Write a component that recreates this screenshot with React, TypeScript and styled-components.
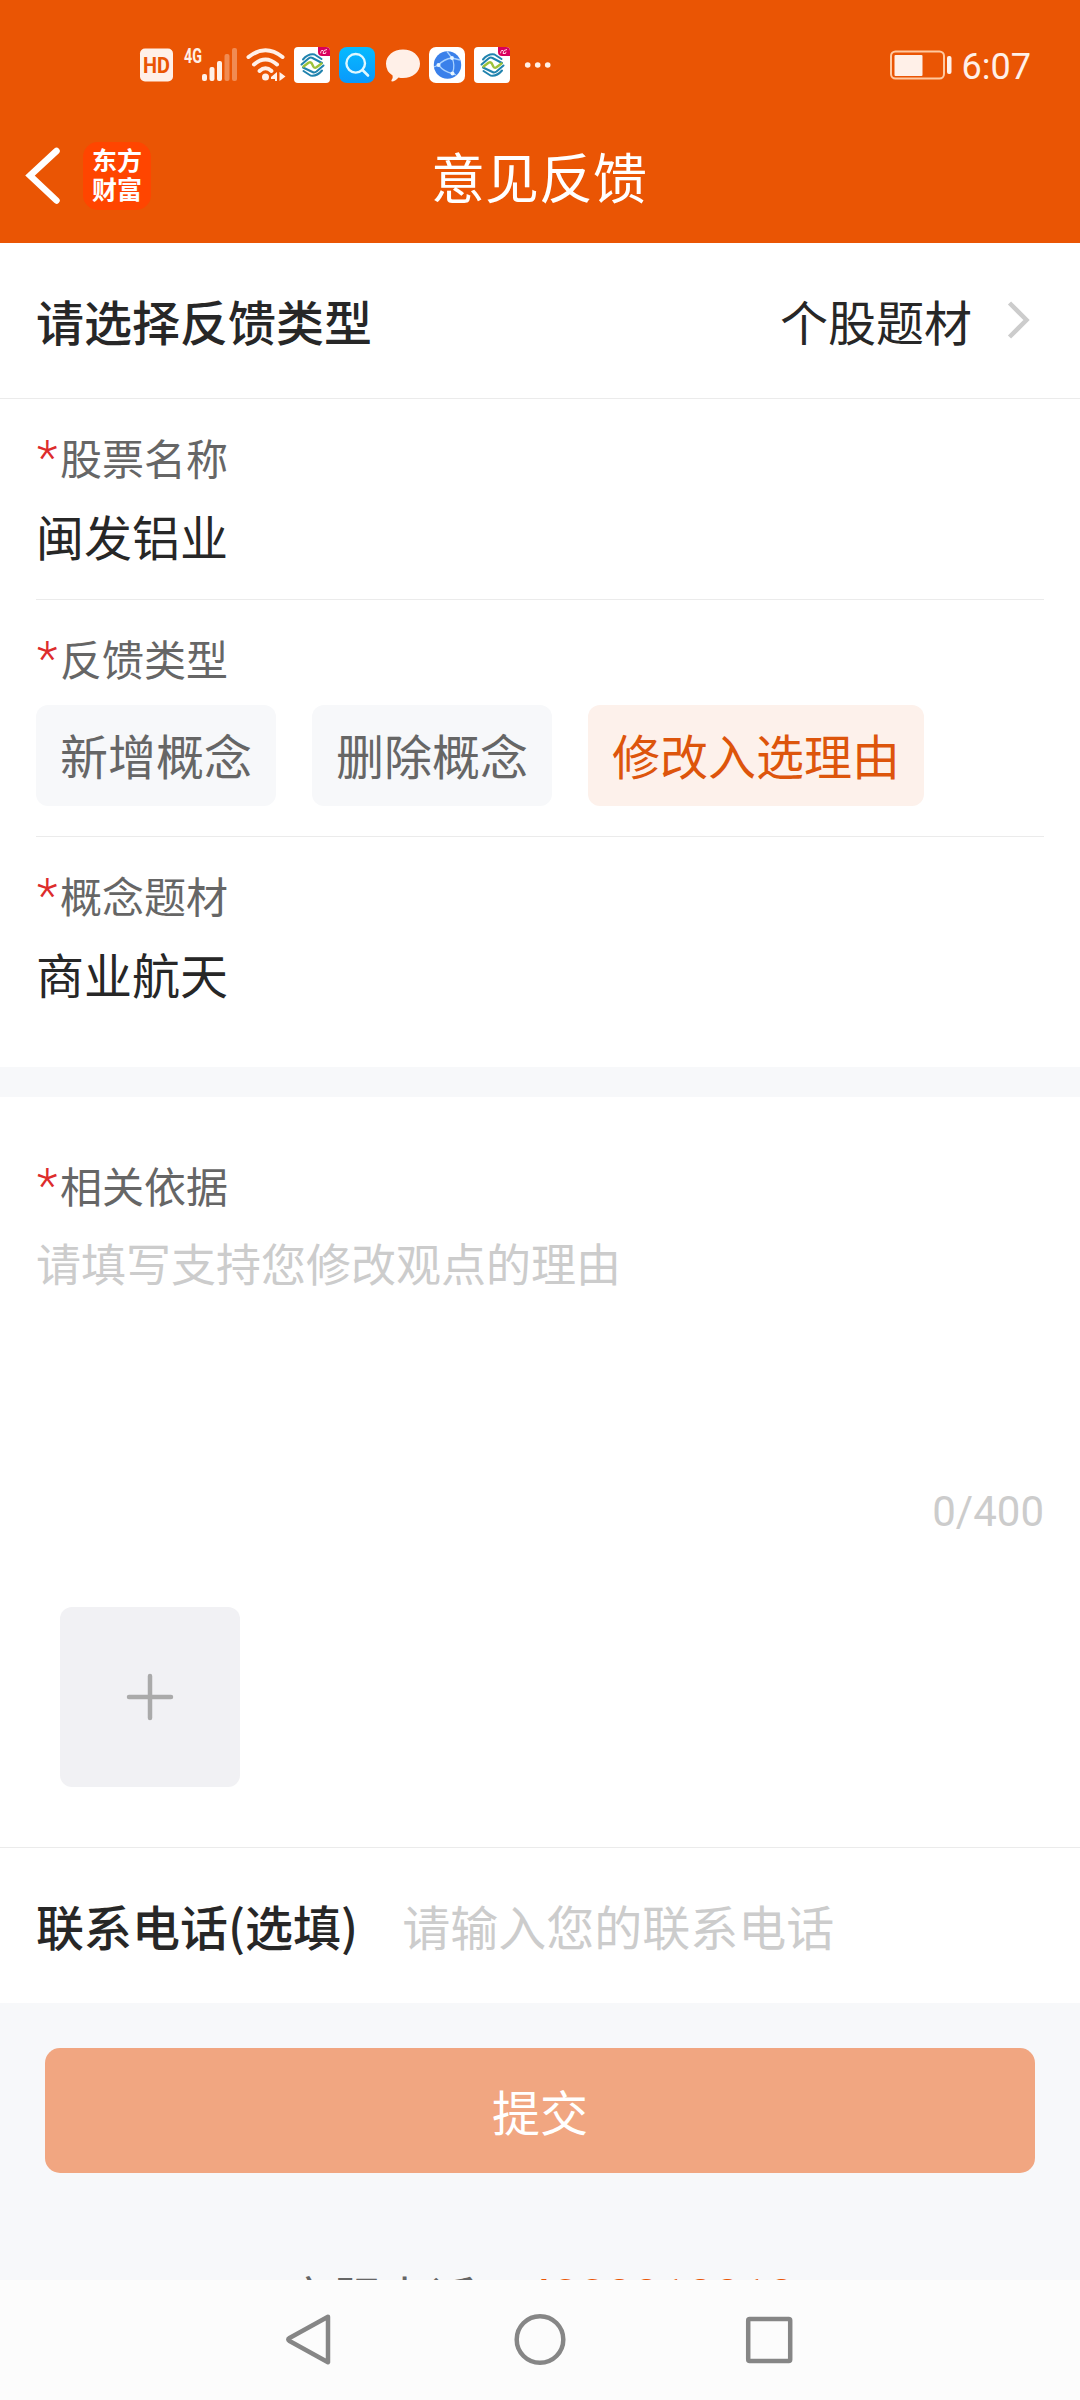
import React from "react";
import styled, { createGlobalStyle } from "styled-components";

const cjk = `"Noto Sans CJK SC", "Noto Sans", sans-serif`;
const latin = `Roboto, "Noto Sans CJK SC", sans-serif`;

const GlobalStyle = createGlobalStyle`
  * { box-sizing: border-box; }
  body { margin: 0; background: #f7f8fa; font-family: ${cjk}; }
  button, input, textarea { font-family: inherit; }
`;

const Screen = styled.div`
  display: flex;
  flex-direction: column;
  width: 1080px;
  height: 2400px;
  overflow: hidden;
  background: #f7f8fa;
  color: #272727;
`;

const Header = styled.header`
  flex: none;
  height: 243px;
  background: #ea5504;
  color: #fff;
`;

const StatusBar = styled.div`
  display: flex;
  justify-content: space-between;
  align-items: center;
  height: 110px;
  padding: 20px 49px 0 140px;
`;

const StatusIcons = styled.div`
  display: flex;
  align-items: center;
`;

const StatusGlyph = styled.svg<{ $gap?: number }>`
  display: block;
  flex: none;
  overflow: visible;
  margin-right: ${(p) => p.$gap ?? 9}px;
`;

const Power = styled.div`
  display: flex;
  align-items: center;
  gap: 10px;
`;

const Clock = styled.span`
  font: 400 36px/50px ${latin};
  color: #fff0e8;
  padding-top: 4px;
`;

const TitleBar = styled.div`
  display: grid;
  grid-template-columns: 1fr auto 1fr;
  align-items: center;
  height: 133px;
  padding: 0 27px 0 25px;
`;

const TitleLeft = styled.div`
  display: flex;
  align-items: center;
  gap: 22px;
  padding-bottom: 1px;
`;

const BrandLogo = styled.div`
  display: flex;
  flex-direction: column;
  align-items: center;
  justify-content: center;
  width: 68px;
  height: 68px;
  border-radius: 15px;
  background: #ff4500;
  font-size: 25px;
  line-height: 29px;
  font-weight: 700;
  padding-bottom: 5px;
`;

const Title = styled.h1`
  margin: 0;
  padding-bottom: 1px;
  font-size: 54px;
  line-height: 80px;
  font-weight: 400;
`;

const Content = styled.main`
  flex: 1;
  min-height: 0;
  overflow: hidden;
`;

const TypeRow = styled.div`
  display: flex;
  align-items: center;
  justify-content: space-between;
  height: 156px;
  padding: 0 48px 2px 36px;
  background: #fff;
  border-bottom: 1px solid #ebebeb;
`;

const RowTitle = styled.span`
  font-size: 48px;
  line-height: 66px;
  font-weight: 500;
  white-space: nowrap;
`;

const TypeValue = styled.div`
  display: flex;
  align-items: center;
  gap: 34px;
  font-size: 48px;
  line-height: 66px;
`;

const Fields = styled.section`
  background: #fff;
  padding: 0 36px;
`;

const Field = styled.div<{ $bottom: number; $line?: boolean }>`
  padding: 28px 0 ${(p) => p.$bottom}px;
  border-bottom: ${(p) => (p.$line ? "1px solid #ebebeb" : "none")};
`;

const Label = styled.div`
  display: flex;
  height: 60px;
  font-size: 42px;
  line-height: 60px;
  color: #666;
`;

const Star = styled.span`
  width: 24px;
  padding-left: 1px;
  font: 400 48px/62px ${latin};
  font-weight: 300;
  color: #dd2c2c;
`;

const Value = styled.div`
  margin-top: 15px;
  font-size: 48px;
  line-height: 66px;
`;

const Chips = styled.div`
  display: flex;
  gap: 36px;
  margin-top: 17px;
`;

const Chip = styled.button<{ $active?: boolean }>`
  height: 101px;
  padding: 0 24px 3px;
  border: 0;
  border-radius: 12px;
  font-size: 48px;
  line-height: 66px;
  background: ${(p) => (p.$active ? "#fdf1eb" : "#f7f8fa")};
  color: ${(p) => (p.$active ? "#dd550c" : "#666")};
`;

const Evidence = styled.section`
  margin-top: 30px;
  padding: 58px 36px 60px;
  background: #fff;
  border-bottom: 1px solid #ebebeb;
`;

const Reason = styled.textarea`
  display: block;
  width: 100%;
  height: 255px;
  margin-top: 17px;
  padding: 0;
  border: 0;
  outline: 0;
  resize: none;
  background: transparent;
  font-size: 45px;
  line-height: 62px;
  &::placeholder { color: #ccc; opacity: 1; }
`;

const Counter = styled.div`
  text-align: right;
  font: 400 42px/50px ${latin};
  color: #ccc;
`;

const Upload = styled.button`
  display: flex;
  align-items: center;
  justify-content: center;
  width: 180px;
  height: 180px;
  margin: 70px 0 0 24px;
  padding: 0;
  border: 0;
  border-radius: 12px;
  background: #f1f1f4;
`;

const Contact = styled.label`
  display: flex;
  align-items: center;
  gap: 44px;
  height: 155px;
  padding: 0 36px 2px;
  background: #fff;
`;

const Phone = styled.input`
  flex: 1;
  min-width: 0;
  height: 66px;
  padding: 0;
  border: 0;
  outline: 0;
  background: transparent;
  font-size: 48px;
  line-height: 66px;
  &::placeholder { color: #ccc; opacity: 1; }
`;

const Submit = styled.button`
  display: block;
  width: 990px;
  height: 125px;
  margin: 45px auto 0;
  padding: 0 0 2px;
  border: 0;
  border-radius: 15px;
  background: #f1a681;
  color: #fff;
  font-size: 48px;
  line-height: 66px;
`;

const Hotline = styled.p`
  margin: 88px 0 0;
  text-align: center;
  font-size: 48px;
  line-height: 70px;
  color: #666;
`;

const HotlineNumber = styled.a`
  font-family: ${latin};
  line-height: 1;
  vertical-align: 4px;
  color: #ea5504;
`;

const SystemNav = styled.nav`
  flex: none;
  display: flex;
  align-items: center;
  justify-content: center;
  gap: 170px;
  height: 120px;
  background: #fcfcfc;
`;

const tint = "#fff0e8";

const CarrierIcon = () => (
  <StatusGlyph width="36" height="36" viewBox="0 0 36 36">
    <rect width="36" height="36" rx="4" fill="#fff" />
    <g fill="none" strokeLinecap="round" strokeLinejoin="round">
      <g stroke="#2083ae" strokeWidth="2">
        <path d="M7.500 17.500L14.500 11.500Q16.500 10 18.500 11L28 16" />
        <path d="M9 12.500Q14 6.500 20.500 7.500L27.500 12" />
        <path d="M29.500 18.500L22.500 24.500Q20.500 26 18.500 25L9 20.500" />
        <path d="M28 23.500Q23 29.500 16.500 28.500L9.500 24" />
      </g>
      <path d="M9.500 19.500L14.500 15.700Q16.500 14.500 17.700 16.200L19.300 19.500Q20.500 21.500 22.500 20.300L27.500 16.500" stroke="#9cc23c" strokeWidth="2.400" />
    </g>
    <path d="M24 0h8q4 0 4 4v5h-8q-4 0-4-4z" fill="#d9005c" />
    <path d="M29 3.500q-2-.5-2 1t-1 1.700M33 2.500l-3 1-1 3h2.500l.5-1.700" fill="none" stroke="#ffd5e5" strokeWidth="1" />
  </StatusGlyph>
);

const StatusLeft = () => (
  <StatusIcons>
    <StatusGlyph $gap={11} width="33" height="34" viewBox="0 0 33 34">
      <rect y="0.500" width="33" height="33" rx="5" fill={tint} />
      <text x="16.500" y="24.700" textAnchor="middle" textLength="27" lengthAdjust="spacingAndGlyphs" fontFamily="Roboto, sans-serif" fontWeight="700" fontSize="22" fill="#ea5504">HD</text>
    </StatusGlyph>
    <StatusGlyph $gap={8} width="54" height="36" viewBox="0 0 54 36">
      <text x="0" y="15.500" textLength="18" lengthAdjust="spacingAndGlyphs" fontFamily="Roboto, sans-serif" fontWeight="700" fontSize="20" fill={tint}>4G</text>
      <g fill={tint}>
        <rect x="18" y="27" width="5" height="7" rx="2" />
        <rect x="25.500" y="20" width="5" height="14" rx="2" />
        <rect x="33" y="14" width="5" height="20" rx="2" />
        <rect x="40.500" y="7" width="5" height="27" rx="2" opacity="0.350" />
        <rect x="48" y="1" width="5" height="33" rx="2" opacity="0.350" />
      </g>
    </StatusGlyph>
    <StatusGlyph $gap={8} width="40" height="36" viewBox="0 0 40 36">
      <g fill="none" stroke={tint} strokeWidth="4" strokeLinecap="round">
        <path d="M2.500 10Q19.500 -3.500 36.500 10" />
        <path d="M8 17.500Q19.500 7.500 31 17.500" />
        <path d="M13.500 24Q19.500 18.500 25.500 24" />
      </g>
      <circle cx="19.500" cy="30" r="3.500" fill={tint} />
      <path d="M31 25v9h-2v-2h-4v-2zM33.500 25l6 4.500-6 4.500z" fill={tint} />
    </StatusGlyph>
    <CarrierIcon />
    <StatusGlyph $gap={11} width="36" height="36" viewBox="0 0 36 36">
      <defs>
        <linearGradient id="searchFill" x1="0" y1="0" x2="0" y2="1">
          <stop offset="0" stopColor="#06bbff" />
          <stop offset="1" stopColor="#0a98fb" />
        </linearGradient>
      </defs>
      <rect width="36" height="36" rx="8" fill="url(#searchFill)" />
      <circle cx="16.700" cy="16.300" r="9.300" fill="none" stroke="#dff8ff" strokeWidth="2.400" />
      <path d="M23.500 23l5.500 5.500" stroke="#dff8ff" strokeWidth="2.600" strokeLinecap="round" />
    </StatusGlyph>
    <StatusGlyph $gap={9} width="34" height="36" viewBox="0 0 34 36">
      <path d="M17 2.500c9.500 0 17 6 17 14.300S26.500 31 17 31q-2.500 0-4.500-.5Q9 34.500 6 34.500q-1.200-.4-.4-1.500 1.600-2 1-4.500Q0 24.500 0 16.800C0 8.500 7.500 2.500 17 2.500z" fill={tint} />
    </StatusGlyph>
    <StatusGlyph width="36" height="36" viewBox="0 0 36 36">
      <rect width="36" height="36" rx="7" fill="#fff" />
      <circle cx="18.500" cy="18" r="13.700" fill="#3a80ea" />
      <g fill="none" stroke="#a9d2ff" strokeWidth="1.300">
        <path d="M9.500 18Q15 12 23 11L31 13M23 11Q26.500 18 23.500 26.500M9.500 18Q15 25 23.500 26.500L27 28M9.500 18L5 20M23 11L18 4.500" />
      </g>
      <g fill="#e8f6ff">
        <circle cx="9.500" cy="18" r="2" />
        <circle cx="23" cy="11" r="1.900" />
        <circle cx="23.500" cy="26.500" r="2" />
      </g>
    </StatusGlyph>
    <CarrierIcon />
    <StatusGlyph $gap={0} width="42" height="36" viewBox="0 0 42 36">
      <g fill={tint}>
        <circle cx="8.700" cy="18" r="2.800" />
        <circle cx="18.700" cy="18" r="2.800" />
        <circle cx="28.700" cy="18" r="2.800" />
      </g>
    </StatusGlyph>
  </StatusIcons>
);

const FieldLabel = ({ children }: { children: React.ReactNode }) => (
  <Label>
    <Star>*</Star>
    {children}
  </Label>
);

export default function App() {
  return (
    <Screen>
      <GlobalStyle />
      <Header>
        <StatusBar>
          <StatusLeft />
          <Power>
            <svg width="62" height="30" viewBox="0 0 62 30">
              <rect x="1" y="1.500" width="53" height="27" rx="4.500" fill="none" stroke="#ffc9a0" strokeWidth="2" />
              <rect x="4.500" y="5" width="28" height="21" rx="1" fill={tint} />
              <rect x="57" y="6" width="4.500" height="18" rx="2" fill={tint} />
            </svg>
            <Clock>6:07</Clock>
          </Power>
        </StatusBar>
        <TitleBar>
          <TitleLeft>
            <svg width="36" height="60" viewBox="0 0 36 60">
              <path d="M31.500 5L5 29.500L31.500 54.500" fill="none" stroke="#fff" strokeWidth="6.500" strokeLinecap="round" />
            </svg>
            <BrandLogo>
              <span>东方</span>
              <span>财富</span>
            </BrandLogo>
          </TitleLeft>
          <Title>意见反馈</Title>
        </TitleBar>
      </Header>

      <Content>
        <TypeRow>
          <RowTitle>请选择反馈类型</RowTitle>
          <TypeValue>
            个股题材
            <svg width="26" height="40" viewBox="0 0 26 40">
              <path d="M3.500 3L20.500 20L3.500 37" fill="none" stroke="#ccc" strokeWidth="4.500" />
            </svg>
          </TypeValue>
        </TypeRow>

        <Fields>
          <Field $bottom={31} $line>
            <FieldLabel>股票名称</FieldLabel>
            <Value>闽发铝业</Value>
          </Field>
          <Field $bottom={30} $line>
            <FieldLabel>反馈类型</FieldLabel>
            <Chips>
              <Chip>新增概念</Chip>
              <Chip>删除概念</Chip>
              <Chip $active>修改入选理由</Chip>
            </Chips>
          </Field>
          <Field $bottom={61}>
            <FieldLabel>概念题材</FieldLabel>
            <Value>商业航天</Value>
          </Field>
        </Fields>

        <Evidence>
          <FieldLabel>相关依据</FieldLabel>
          <Reason placeholder="请填写支持您修改观点的理由" />
          <Counter>0/400</Counter>
          <Upload aria-label="添加图片">
            <svg width="48" height="48" viewBox="0 0 48 48">
              <path d="M24 3v42M3 24h42" stroke="#aaa" strokeWidth="4.500" strokeLinecap="round" />
            </svg>
          </Upload>
        </Evidence>

        <Contact>
          <RowTitle>联系电话(选填)</RowTitle>
          <Phone placeholder="请输入您的联系电话" />
        </Contact>

        <Submit>提交</Submit>
        <Hotline>
          客服电话：<HotlineNumber>4008818818</HotlineNumber>
        </Hotline>
      </Content>

      <SystemNav>
        <svg width="60" height="60" viewBox="0 0 60 60">
          <path d="M48 6.800L9.500 28Q7 29.500 9.500 31L48 52.200Z" fill="none" stroke="#868686" strokeWidth="4.500" strokeLinejoin="round" />
        </svg>
        <svg width="60" height="60" viewBox="0 0 60 60">
          <circle cx="30" cy="29.500" r="23.300" fill="none" stroke="#868686" strokeWidth="4.500" />
        </svg>
        <svg width="60" height="60" viewBox="0 0 60 60">
          <rect x="8.200" y="9" width="42" height="42" rx="1.500" fill="none" stroke="#868686" strokeWidth="4.500" />
        </svg>
      </SystemNav>
    </Screen>
  );
}
